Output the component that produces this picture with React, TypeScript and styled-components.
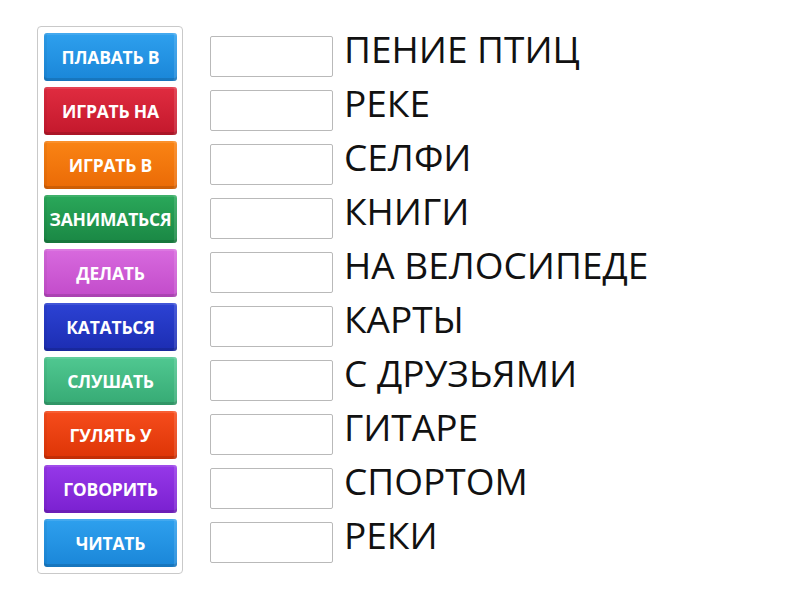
import React from "react";
import styled, { createGlobalStyle } from "styled-components";

const Global = createGlobalStyle`
  html, body { margin: 0; padding: 0; background: #ffffff; }
  body { font-family: "Open Sans", "Noto Sans", sans-serif; }
`;

const Page = styled.div`
  display: flex;
  align-items: flex-start;
  padding: 26px 0 0 37px;
  gap: 27px;
`;

const Tray = styled.div`
  display: flex;
  flex-direction: column;
  gap: 6px;
  padding: 6px 5px 6px 6px;
  border: 1px solid #c9c9c9;
  border-radius: 4px;
  background: #fff;
`;

const Tile = styled.div<{ $top: string; $bottom: string }>`
  box-sizing: border-box;
  width: 133px;
  height: 48px;
  display: flex;
  align-items: center;
  justify-content: center;
  border-radius: 3px;
  background: linear-gradient(to bottom, ${(p) => p.$top}, ${(p) => p.$bottom});
  box-shadow: inset 0 -3px 0 rgba(0, 0, 0, 0.12), inset -3px 0 0 rgba(255, 255, 255, 0.12),
    inset 3px 0 0 rgba(0, 0, 0, 0.04), inset 0 2px 0 rgba(255, 255, 255, 0.1);
  color: #ffffff;
  font-family: "Open Sans", "Noto Sans", sans-serif;
  font-weight: 700;
  font-size: 17.5px;
  white-space: nowrap;
  letter-spacing: -0.2px;
`;

const Rows = styled.div`
  display: flex;
  flex-direction: column;
  gap: 13px;
  padding-top: 10px;
`;

const Row = styled.div`
  display: flex;
  align-items: flex-start;
  gap: 11px;
`;

const Slot = styled.div`
  box-sizing: border-box;
  width: 123px;
  height: 41px;
  border: 1px solid #b9b9b9;
  border-radius: 2px;
  background: #fff;
`;

const Label = styled.div`
  font-family: "Open Sans", "Noto Sans", sans-serif;
  font-size: 37px;
  line-height: 25px;
  color: #111;
  white-space: nowrap;
`;

const tiles = [
  { t: "ПЛАВАТЬ В", a: "#2ea0ee", b: "#1a86d8" },
  { t: "ИГРАТЬ НА", a: "#e02c40", b: "#c3182c" },
  { t: "ИГРАТЬ В", a: "#fa8414", b: "#ea6a06" },
  { t: "ЗАНИМАТЬСЯ", a: "#2aa85a", b: "#1a8744" },
  { t: "ДЕЛАТЬ", a: "#d86ade", b: "#c24bca" },
  { t: "КАТАТЬСЯ", a: "#2c42d4", b: "#1c2db2" },
  { t: "СЛУШАТЬ", a: "#50c891", b: "#36aa74" },
  { t: "ГУЛЯТЬ У", a: "#f64c1c", b: "#dd3406" },
  { t: "ГОВОРИТЬ", a: "#9638e8", b: "#7a20d0" },
  { t: "ЧИТАТЬ", a: "#2ea0ee", b: "#1a86d8" },
];

const answers = [
  "ПЕНИЕ ПТИЦ",
  "РЕКЕ",
  "СЕЛФИ",
  "КНИГИ",
  "НА ВЕЛОСИПЕДЕ",
  "КАРТЫ",
  "С ДРУЗЬЯМИ",
  "ГИТАРЕ",
  "СПОРТОМ",
  "РЕКИ",
];

export default function App() {
  return (
    <>
      <Global />
      <Page>
        <Tray>
          {tiles.map((x) => (
            <Tile key={x.t} $top={x.a} $bottom={x.b}>
              {x.t}
            </Tile>
          ))}
        </Tray>
        <Rows>
          {answers.map((a) => (
            <Row key={a}>
              <Slot />
              <Label>{a}</Label>
            </Row>
          ))}
        </Rows>
      </Page>
    </>
  );
}
